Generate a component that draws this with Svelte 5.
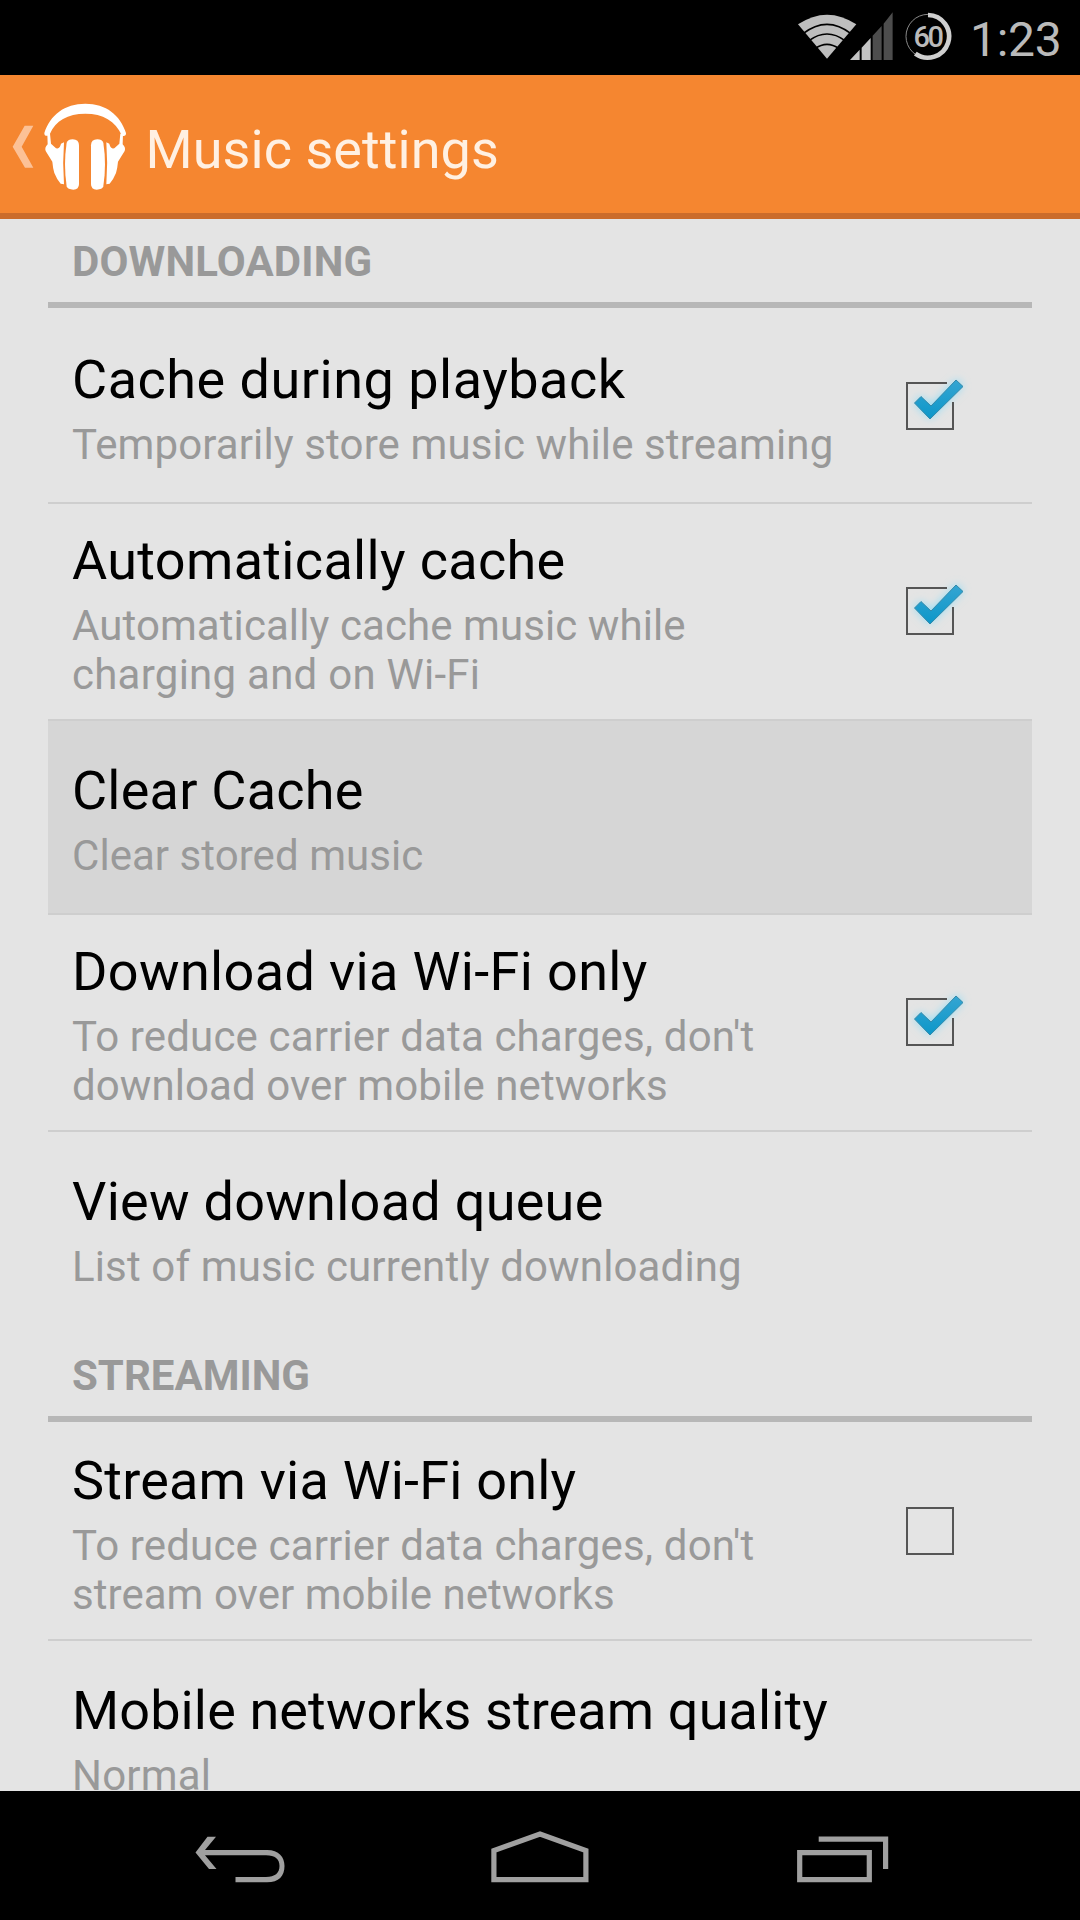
<script>
  // Each text carries its own tracking, in pixels.
  const groups = [
    {
      title: 'DOWNLOADING',
      cls: 'g1',
      items: [
        { title: ['Cache during playback', 0.5], lines: [['Temporarily store music while streaming', 0.12]], checked: true },
        { title: ['Automatically cache', 0.33], lines: [['Automatically cache music while', 0.08], ['charging and on Wi-Fi', 0.25]], checked: true },
        { title: ['Clear Cache', 0.22], lines: [['Clear stored music', 0.05]], pressed: true },
        { title: ['Download via Wi-Fi only', 0.36], lines: [["To reduce carrier data charges, don't", 0.15], ['download over mobile networks', 0.08]], checked: true },
        { title: ['View download queue', 0.27], lines: [['List of music currently downloading', 0.14]] }
      ]
    },
    {
      title: 'STREAMING',
      cls: 'g2',
      items: [
        { title: ['Stream via Wi-Fi only', 0.21], lines: [["To reduce carrier data charges, don't", 0.15], ['stream over mobile networks', 0.04]], checked: false },
        { title: ['Mobile networks stream quality', 0.12], lines: [['Normal', 0.2]] }
      ]
    }
  ];
</script>

<div class="screen">
  <header class="status">
    <svg class="wifi" viewBox="0 0 180 180" width="60" height="60">
      <path fill="#bebebe" d="M3 73Q90 15 178 73L90 176Z" />
      <g fill="none" stroke="#000" stroke-width="5">
        <path d="M18 101Q90 45 162 101" />
        <path d="M36 122Q90 82 144 122" />
        <path d="M54 146Q90 120 126 146" />
      </g>
    </svg>
    <svg class="signal" viewBox="211 0 130 180" width="43.3" height="60">
      <path fill="#4d4d4d" d="M279 107L306 78V180H279ZM312 71L339 37V180H312Z" />
      <path fill="#c4c4c4" d="M211 180L240 149V180ZM246 143L273 114V180H246Z" />
    </svg>
    <div class="battery">
      <svg viewBox="0 0 142 146" width="47.3" height="48.7">
        <circle cx="69" cy="73" r="66" fill="none" stroke="#8a8a8a" stroke-width="3" />
        <path d="M69 9A64 64 0 1 1 31 125" fill="none" stroke="#cfcfcf" stroke-width="14" />
      </svg>
      <span>60</span>
    </div>
    <span class="clock">1:23</span>
  </header>

  <div class="appbar">
    <svg class="brand" viewBox="36 100 345 262" width="115" height="87.33">
      <path fill="#fcc196" d="M74 168H100L65 231L100 294H75L38 231Z" />
      <g fill="#fff">
        <path d="M133 190C150 136 194 102 256 102C318 102 361 136 378 190C379 196 373 202 366 198C346 154 309 132 256 132C203 132 166 154 150 192C146 201 132 201 133 190Z" />
        <path d="M142 192H150L153 222L168 236C174 237 180 235 183 222L192 218Q187 281 192 344L182 342Q170 328 163 310Q159 298 157 276L137 244Q133 234 143 224Z" />
        <path d="M369 192H361L358 222L343 236C337 237 331 235 328 222L319 218Q324 281 319 344L329 342Q341 328 348 310Q352 298 354 276L374 244Q378 234 368 224Z" />
        <path d="M200 219Q204 209 218 209Q237 209 237 227V343Q237 360 220 360Q203 360 200 350Q190 284 200 219Z" />
        <path d="M310 219Q306 209 292 209Q273 209 273 227V343Q273 360 290 360Q307 360 310 350Q320 284 310 219Z" />
      </g>
    </svg>
    <h1>Music settings</h1>
  </div>

  <main>
    {#each groups as group}
      <section>
        <h2 class={group.cls}>{group.title}</h2>
        {#each group.items as item}
          <div class="row" class:tall={item.lines.length > 1} class:pressed={item.pressed}>
            <div class="text">
              <div class="title" style:letter-spacing="{item.title[1]}px">{item.title[0]}</div>
              {#each item.lines as [line, tracking]}
                <div class="sub" style:letter-spacing="{tracking}px">{line}</div>
              {/each}
            </div>
            {#if item.checked !== undefined}
              <svg class="check" viewBox="0 1 110 90" width="110" height="90">
                {#if item.checked}
                  <defs>
                    <linearGradient id="tick" x1="0" y1="0" x2="0" y2="1">
                      <stop offset="0" stop-color="#35a5d2" />
                      <stop offset="1" stop-color="#0c97c9" />
                    </linearGradient>
                    <filter id="glow" x="-40%" y="-40%" width="180%" height="180%"><feGaussianBlur stdDeviation="4" /></filter>
                  </defs>
                  <path class="halo" d="M34 43L41 36L51 45L77 19L83 26L50 59Z" filter="url(#glow)" />
                  <path d="M67 23H27V69H73V42" fill="none" stroke="#555" stroke-width="2" />
                  <path d="M34.500 43L41 36.500L51 46L76 20L83 26.500L50 59Z" fill="url(#tick)" stroke="#3389aa" stroke-width="1" />
                {:else}
                  <rect x="27" y="23" width="46" height="46" fill="none" stroke="#555" stroke-width="2" />
                {/if}
              </svg>
            {/if}
          </div>
        {/each}
      </section>
    {/each}
  </main>

  <nav>
    <svg viewBox="195 1830 90 54" width="90" height="54">
      <path d="M207.500 1836.700H216L205 1850H267C279 1850 284.500 1857 284.500 1866C284.500 1876 279 1882.300 267 1882.300H235.500V1877H266C275 1877 279.500 1873 279.500 1866C279.500 1859 275 1855.300 266 1855.300H205L216.500 1869H209L195.500 1852.500Z" fill="#a0a0a0" />
    </svg>
    <svg class="home" viewBox="491 1830 98 54" width="98" height="54">
      <path d="M493.900 1879.600V1850.500L540 1834L585.900 1850.500V1879.600Z" fill="none" stroke="#a0a0a0" stroke-width="5.200" />
    </svg>
    <svg viewBox="797 1830 92 54" width="92" height="54">
      <path d="M799.700 1852.600H869.300V1879.700H799.700ZM818.700 1839.200H885.600V1869" fill="none" stroke="#a0a0a0" stroke-width="5.200" />
    </svg>
  </nav>
</div>

<style>
  :global(body) { background: #000; }
  .screen {
    width: 1080px;
    height: 1920px;
    display: flex;
    flex-direction: column;
    overflow: hidden;
    background: #e4e4e4;
    font-family: Roboto, sans-serif;
    white-space: nowrap;
  }
  .status {
    height: 75px;
    flex: none;
    display: flex;
    background: #000;
    color: #bababa;
    padding-left: 797px;
  }
  .signal { margin-left: -7px; }
  .battery { margin: 12px 0 0 11.500px; width: 47.300px; height: 49px; display: grid; }
  .battery svg, .battery span { grid-area: 1 / 1; }
  .battery span { place-self: center; font-size: 29px; font-weight: 500; line-height: 30px; letter-spacing: -2.500px; padding-right: 2px; }
  .clock { margin-left: 18px; font-size: 48px; line-height: 79px; letter-spacing: -0.300px; }
  .appbar {
    box-sizing: border-box;
    height: 144px;
    flex: none;
    display: flex;
    background: #f58630;
    border-bottom: 6px solid #cb6c2b;
    padding-left: 12px;
  }
  .brand { margin-top: 28px; }
  h1 { margin: 0 0 0 18.500px; font-size: 54px; line-height: 149px; font-weight: 400; letter-spacing: 0.060px; color: #fff0e2; }
  main { flex: 1; min-height: 0; overflow: hidden; padding: 0 48px; }
  h2 {
    box-sizing: border-box;
    margin: 0 0 2px;
    border-bottom: 6px solid #b7b7b7;
    padding-left: 24px;
    font-size: 42px;
    font-weight: 700;
    color: #999;
  }
  .g1 { height: 89px; line-height: 86px; letter-spacing: 0.150px; }
  .g2 { height: 96px; line-height: 100px; }
  .row {
    box-sizing: border-box;
    height: 194px;
    display: flex;
    align-items: center;
    justify-content: space-between;
    border-bottom: 2px solid #cecece;
    padding: 0 42px 0 24px;
  }
  .row.tall { height: 217px; }
  .row:last-child { border-color: transparent; }
  .pressed { background: #d6d6d6; }
  .text { padding-top: 5px; }
  .tall .check { margin-bottom: 1px; }
  .title { margin-bottom: 9px; font-size: 54px; line-height: 62px; color: #000; }
  .sub { font-size: 42px; line-height: 49px; color: #999; }
  .halo { fill: #8fdcf5; }
  nav {
    height: 129px;
    flex: none;
    display: flex;
    padding: 39px 0 0 195px;
    box-sizing: border-box;
    background: #000;
  }
  .home { margin: 0 208px 0 206px; }
</style>
